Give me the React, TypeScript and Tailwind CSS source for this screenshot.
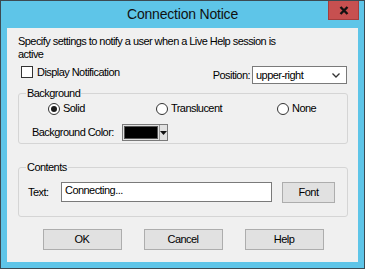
import React from 'react';

const Radio = ({ checked }: { checked?: boolean }) => (
  <span className="w-[12px] h-[12px] rounded-full border border-[#333333] bg-white flex items-center justify-center shrink-0">
    {checked && <span className="w-[6px] h-[6px] rounded-full bg-[#1a1a1a]"></span>}
  </span>
);

const WinButton = ({ label, className = '' }: { label: string; className?: string }) => (
  <button className={`h-[21px] bg-[#e1e1e1] border border-[#adadad] text-[11px] leading-[13px] tracking-[-0.55px] text-black flex items-center justify-center ${className}`}>
    {label}
  </button>
);

export default function App() {
  return (
    <div className="w-[365px] h-[269px] bg-[#5ec5e8] border border-[#3c4a52] flex flex-col font-['Liberation_Sans',Arial,sans-serif] text-black select-none">
      {/* title bar */}
      <div className="h-[27px] grid grid-cols-[1fr_auto_1fr] shrink-0">
        <div></div>
        <div className="text-[14px] leading-[27px] tracking-[-0.2px] text-[#111]">Connection Notice</div>
        <div className="flex justify-end pr-[5px]">
          <div className="w-[31px] h-[19px] bg-[#c75050] border border-[#a33d3d] border-t-0 flex items-center justify-center">
            <svg width="10" height="9" viewBox="0 0 10 9">
              <path d="M1.5 1 L8.5 8 M8.5 1 L1.5 8" stroke="#111" strokeWidth="2.4" />
            </svg>
          </div>
        </div>
      </div>

      {/* client area */}
      <div className="mx-[6px] mb-[6px] flex-1 bg-[#f0f0f0] flex flex-col pl-[11px] pr-[10px] pt-[7px] text-[11px] leading-[13px] tracking-[-0.55px]">
        <p>
          Specify settings to notify a user when a Live Help session is
          <br />
          active
        </p>

        <div className="mt-[4px] h-[19px] flex justify-between">
          <label className="flex items-center gap-[4px] ml-[3px] self-start mt-[1px] h-[12px]">
            <span className="w-[12px] h-[12px] border border-[#333333] bg-white"></span>
            <span>Display Notification</span>
          </label>
          <div className="flex items-center gap-[2px] mr-[1px] mt-[1px]">
            <span>Position:</span>
            <div className="w-[95px] h-[18px] bg-white border border-[#7a7a7a] flex items-center justify-between pl-[3px] pr-[6px]">
              <span>upper-right</span>
              <svg width="8" height="5" viewBox="0 0 8 5">
                <path d="M0.5 0.5 L4 4 L7.5 0.5" stroke="#333" strokeWidth="1.3" fill="none" />
              </svg>
            </div>
          </div>
        </div>

        {/* Background group */}
        <div className="mt-[9px] h-[51px] border border-[#d5d5d5] rounded-[3px] flex flex-col">
          <span className="-mt-[7px] ml-[7px] px-[1px] w-fit bg-[#f0f0f0]">Background</span>
          <div className="mt-[2px] h-[13px] flex items-center pl-[29px]">
            <div className="w-[108px] flex items-center gap-[3px]">
              <Radio checked />
              <span>Solid</span>
            </div>
            <div className="w-[121px] flex items-center gap-[3px]">
              <Radio />
              <span>Translucent</span>
            </div>
            <div className="flex items-center gap-[3px]">
              <Radio />
              <span>None</span>
            </div>
          </div>
          <div className="mt-[9px] h-[17px] flex items-center pl-[13px]">
            <span className="w-[90px] whitespace-nowrap">Background Color:</span>
            <div className="w-[46px] h-[17px] border border-[#7a7a7a] bg-[#e1e1e1] flex items-stretch">
              <div className="w-[35px] m-[1px] bg-black border border-[#555]"></div>
              <div className="flex-1 border-l border-[#999] flex items-center justify-center">
                <svg width="7" height="4" viewBox="0 0 7 4">
                  <path d="M0 0 L7 0 L3.5 4 Z" fill="#111" />
                </svg>
              </div>
            </div>
          </div>
        </div>

        {/* Contents group */}
        <div className="mt-[23px] h-[50px] border border-[#d5d5d5] rounded-[3px] flex flex-col">
          <span className="-mt-[7px] ml-[7px] px-[1px] w-fit bg-[#f0f0f0]">Contents</span>
          <div className="mt-[8px] h-[20px] flex items-center pl-[9px]">
            <span className="w-[33px]">Text:</span>
            <div className="w-[211px] h-[20px] bg-white border border-[#7a7a7a] pl-[3px] pt-[1px]">
              Connecting...
            </div>
            <WinButton label="Font" className="ml-[10px] w-[53px] h-[20px]" />
          </div>
        </div>

        <div className="mt-[12px] flex justify-center gap-[22px]">
          <WinButton label="OK" className="w-[79px]" />
          <WinButton label="Cancel" className="w-[79px]" />
          <WinButton label="Help" className="w-[79px]" />
        </div>
      </div>
    </div>
  );
}
